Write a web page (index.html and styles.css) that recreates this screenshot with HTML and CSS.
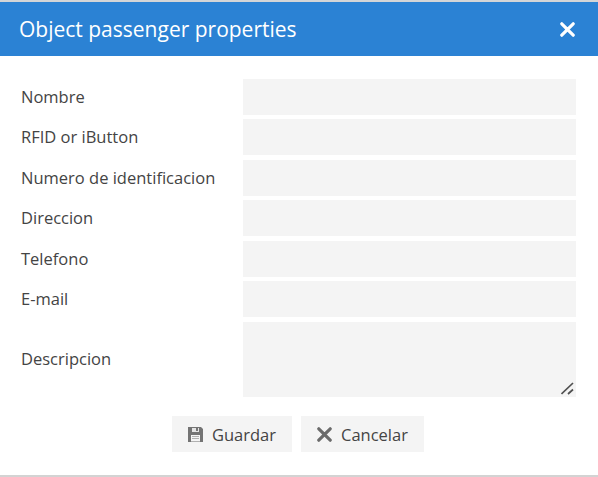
FILE: index.html
```
<!DOCTYPE html>
<html lang="es">
<head>
    <meta charset="UTF-8">
    <meta name="viewport" content="width=device-width, initial-scale=1.0">
    <title>Object passenger properties</title>
    <link rel="stylesheet" href="styles.css">
</head>
<body>

    <div class="dialog">
        <div class="dialog-header">
            <h1 class="dialog-title">Object passenger properties</h1>
            <button type="button" class="close-button" aria-label="Cerrar">
                <svg width="15" height="15" viewBox="0 0 15 15"><path d="M1.8 1.8L13.2 13.2M13.2 1.8L1.8 13.2"/></svg>
            </button>
        </div>

        <form class="dialog-form">
            <div class="row">
                <label for="name">Nombre</label>
                <input type="text" id="name">
            </div>
            <div class="row">
                <label for="rfid">RFID or iButton</label>
                <input type="text" id="rfid">
            </div>
            <div class="row">
                <label for="idn">Numero de identificacion</label>
                <input type="text" id="idn">
            </div>
            <div class="row">
                <label for="address">Direccion</label>
                <input type="text" id="address">
            </div>
            <div class="row">
                <label for="phone">Telefono</label>
                <input type="text" id="phone">
            </div>
            <div class="row">
                <label for="email">E-mail</label>
                <input type="text" id="email">
            </div>
            <div class="row row-desc">
                <label for="desc">Descripcion</label>
                <div class="textarea-box">
                    <textarea id="desc"></textarea>
                    <svg class="grip" width="13" height="13" viewBox="0 0 13 13"><path d="M0.5 12L12 1M7 12L12 7.5"/></svg>
                </div>
            </div>
        </form>

        <div class="buttons">
            <button type="button" class="button button-save">
                <svg width="15" height="15" viewBox="0 0 15 15">
                    <path fill="#747474" d="M0 0H13L15 2V15H0Z"/>
                    <path fill="#e4e4e4" d="M4 1H11V5H4Z"/>
                    <path fill="#747474" d="M8 1H10V4H8Z"/>
                    <path fill="#f4f4f4" d="M3 8H12V14H3Z"/>
                    <path fill="#b0b0b0" d="M4 9H11V10H4ZM4 11H11V12H4ZM3 14H12V15H3Z"/>
                </svg>
                <span>Guardar</span>
            </button>
            <button type="button" class="button button-cancel">
                <svg class="cross" width="15" height="15" viewBox="0 0 15 15"><path d="M1.8 1.8L13.2 13.2M13.2 1.8L1.8 13.2"/></svg>
                <span>Cancelar</span>
            </button>
        </div>
    </div>

</body>
</html>
```
FILE: styles.css
```
* {
    box-sizing: border-box;
}
body {
    margin: 0;
    font-family: "Open Sans", sans-serif;
    font-size: 16.5px;
    color: #444444;
    background-color: #ffffff;
}
.dialog {
    height: 477px;
    border-top: 2px solid #d3d5d7;
    border-bottom: 2px solid #d3d3d3;
}
.dialog-header {
    display: flex;
    align-items: center;
    justify-content: space-between;
    height: 54px;
    padding: 0 23px 0 19px;
    background-color: #2b82d4;
}
.dialog-title {
    margin: 0;
    font-size: 21px;
    font-weight: 400;
    color: #ffffff;
}
.close-button {
    display: flex;
    padding: 0;
    border: 0;
    background: none;
    cursor: pointer;
}
.close-button svg {
    stroke: #ffffff;
    stroke-width: 3.2;
    stroke-linecap: round;
}
.dialog-form {
    display: flex;
    flex-direction: column;
    gap: 4.5px;
    padding: 22.9px 22px 0 21px;
}
.row {
    display: grid;
    grid-template-columns: 222px 333px;
    align-items: center;
    height: 36px;
}
.row-desc {
    height: 75px;
}
label {
    line-height: 22px;
}
input,
textarea {
    display: block;
    width: 100%;
    height: 100%;
    padding: 0 8px;
    border: 0;
    outline: none;
    font: inherit;
    color: inherit;
    background-color: #f4f4f4;
}
textarea {
    resize: none;
}
.textarea-box {
    position: relative;
    height: 75px;
}
.grip {
    position: absolute;
    right: 2px;
    bottom: 2px;
    fill: none;
    stroke: #505050;
    stroke-width: 1.7;
}
.buttons {
    display: flex;
    gap: 9px;
    padding: 19.1px 0 0 172px;
}
.button {
    display: flex;
    align-items: center;
    height: 36px;
    padding: 0 0 0 16px;
    gap: 9px;
    border: 0;
    font: inherit;
    color: inherit;
    background-color: #f4f4f4;
    cursor: pointer;
}
.button svg {
    margin-top: 1px;
}
.button span {
    padding-top: 2px;
    line-height: 22px;
}
.button-save {
    width: 120px;
}
.button-cancel {
    width: 123px;
}
.cross {
    stroke: #6b6b6b;
    stroke-width: 3.2;
    stroke-linecap: round;
}
```
